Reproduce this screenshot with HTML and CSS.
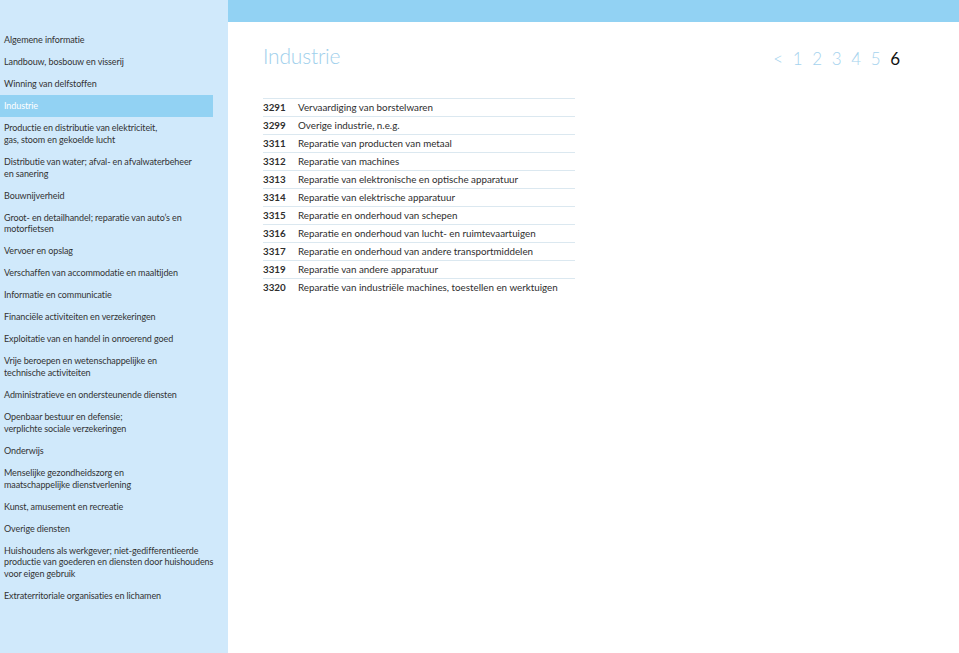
FILE: index.html
```html
<!DOCTYPE html>
<html lang="nl">
<head>
<meta charset="utf-8">
<title>Industrie</title>
<link rel="stylesheet" href="styles.css">
</head>
<body>
<div class="page">
  <nav class="sidebar">
    <ul class="menu">
      <li>Algemene informatie</li>
      <li>Landbouw, bosbouw en visserij</li>
      <li>Winning van delfstoffen</li>
      <li class="active">Industrie</li>
      <li>Productie en distributie van elektriciteit,<br>gas, stoom en gekoelde lucht</li>
      <li>Distributie van water; afval- en afvalwaterbeheer<br>en sanering</li>
      <li>Bouwnijverheid</li>
      <li>Groot- en detailhandel; reparatie van auto’s en<br>motorfietsen</li>
      <li>Vervoer en opslag</li>
      <li>Verschaffen van accommodatie en maaltijden</li>
      <li>Informatie en communicatie</li>
      <li>Financiële activiteiten en verzekeringen</li>
      <li>Exploitatie van en handel in onroerend goed</li>
      <li>Vrije beroepen en wetenschappelijke en<br>technische activiteiten</li>
      <li>Administratieve en ondersteunende diensten</li>
      <li>Openbaar bestuur en defensie;<br>verplichte sociale verzekeringen</li>
      <li>Onderwijs</li>
      <li>Menselijke gezondheidszorg en<br>maatschappelijke dienstverlening</li>
      <li>Kunst, amusement en recreatie</li>
      <li>Overige diensten</li>
      <li>Huishoudens als werkgever; niet-gedifferentieerde<br>productie van goederen en diensten door huishoudens<br>voor eigen gebruik</li>
      <li>Extraterritoriale organisaties en lichamen</li>
    </ul>
  </nav>
  <main class="main">
    <div class="topbar"></div>
    <header class="header">
      <h1 class="title">Industrie</h1>
      <div class="pager">
        <span>&lt;</span><span>1</span><span>2</span><span>3</span><span>4</span><span>5</span><span class="current">6</span>
      </div>
    </header>
    <div class="codes">
      <div class="row"><span class="code">3291</span><span class="desc">Vervaardiging van borstelwaren</span></div>
      <div class="row"><span class="code">3299</span><span class="desc">Overige industrie, n.e.g.</span></div>
      <div class="row"><span class="code">3311</span><span class="desc">Reparatie van producten van metaal</span></div>
      <div class="row"><span class="code">3312</span><span class="desc">Reparatie van machines</span></div>
      <div class="row"><span class="code">3313</span><span class="desc">Reparatie van elektronische en optische apparatuur</span></div>
      <div class="row"><span class="code">3314</span><span class="desc">Reparatie van elektrische apparatuur</span></div>
      <div class="row"><span class="code">3315</span><span class="desc">Reparatie en onderhoud van schepen</span></div>
      <div class="row"><span class="code">3316</span><span class="desc">Reparatie en onderhoud van lucht- en ruimtevaartuigen</span></div>
      <div class="row"><span class="code">3317</span><span class="desc">Reparatie en onderhoud van andere transportmiddelen</span></div>
      <div class="row"><span class="code">3319</span><span class="desc">Reparatie van andere apparatuur</span></div>
      <div class="row"><span class="code">3320</span><span class="desc">Reparatie van industriële machines, toestellen en werktuigen</span></div>
    </div>
  </main>
</div>
</body>
</html>
```

FILE: styles.css
```css
* { box-sizing: border-box; }
html, body { margin: 0; padding: 0; background: #ffffff; }
body {
  font-family: Lato, "Open Sans", "DejaVu Sans", sans-serif;
  color: #333333;
}
.page {
  display: flex;
  min-height: 653px;
}
.sidebar {
  width: 228px;
  flex: 0 0 228px;
  background: #d0e9fb;
  padding-top: 29px;
}
.menu {
  list-style: none;
  margin: 0;
  padding: 0;
  width: 213px;
}
.menu li {
  font-size: 9px;
  letter-spacing: -0.1px;
  line-height: 11.8px;
  padding: 5.1px 3px 5.1px 4px;
  color: #333333;
  white-space: nowrap;
}
.menu li.active {
  background: #92d2f3;
  color: #ffffff;
}
.main {
  flex: 1;
  display: flex;
  flex-direction: column;
}
.topbar {
  height: 22px;
  background: #92d2f3;
}
.header {
  display: flex;
  justify-content: space-between;
  align-items: center;
  padding: 0 58px 0 35px;
  height: 68px;
}
.title {
  margin: 0;
  font-weight: 300;
  font-size: 21px;
  line-height: 24px;
  color: #9fd0ec;
  letter-spacing: -0.2px;
}
.pager {
  display: flex;
  gap: 8px;
  font-size: 17px;
  font-weight: 300;
  line-height: 20px;
  color: #a6d3ee;
  padding-top: 5px;
}
.pager span {
  width: 11.5px;
  text-align: center;
}
.pager .current {
  color: #111111;
  font-weight: 400;
}
.codes {
  margin: 8px 0 0 35px;
  width: 312px;
}
.row {
  display: flex;
  height: 18px;
  align-items: center;
  padding-bottom: 1px;
  border-top: 1px solid #dbe8f0;
  font-size: 9.8px;
  color: #2e2e2e;
}
.code {
  width: 35px;
  font-weight: 700;
}
.desc {
  white-space: nowrap;
}
```
